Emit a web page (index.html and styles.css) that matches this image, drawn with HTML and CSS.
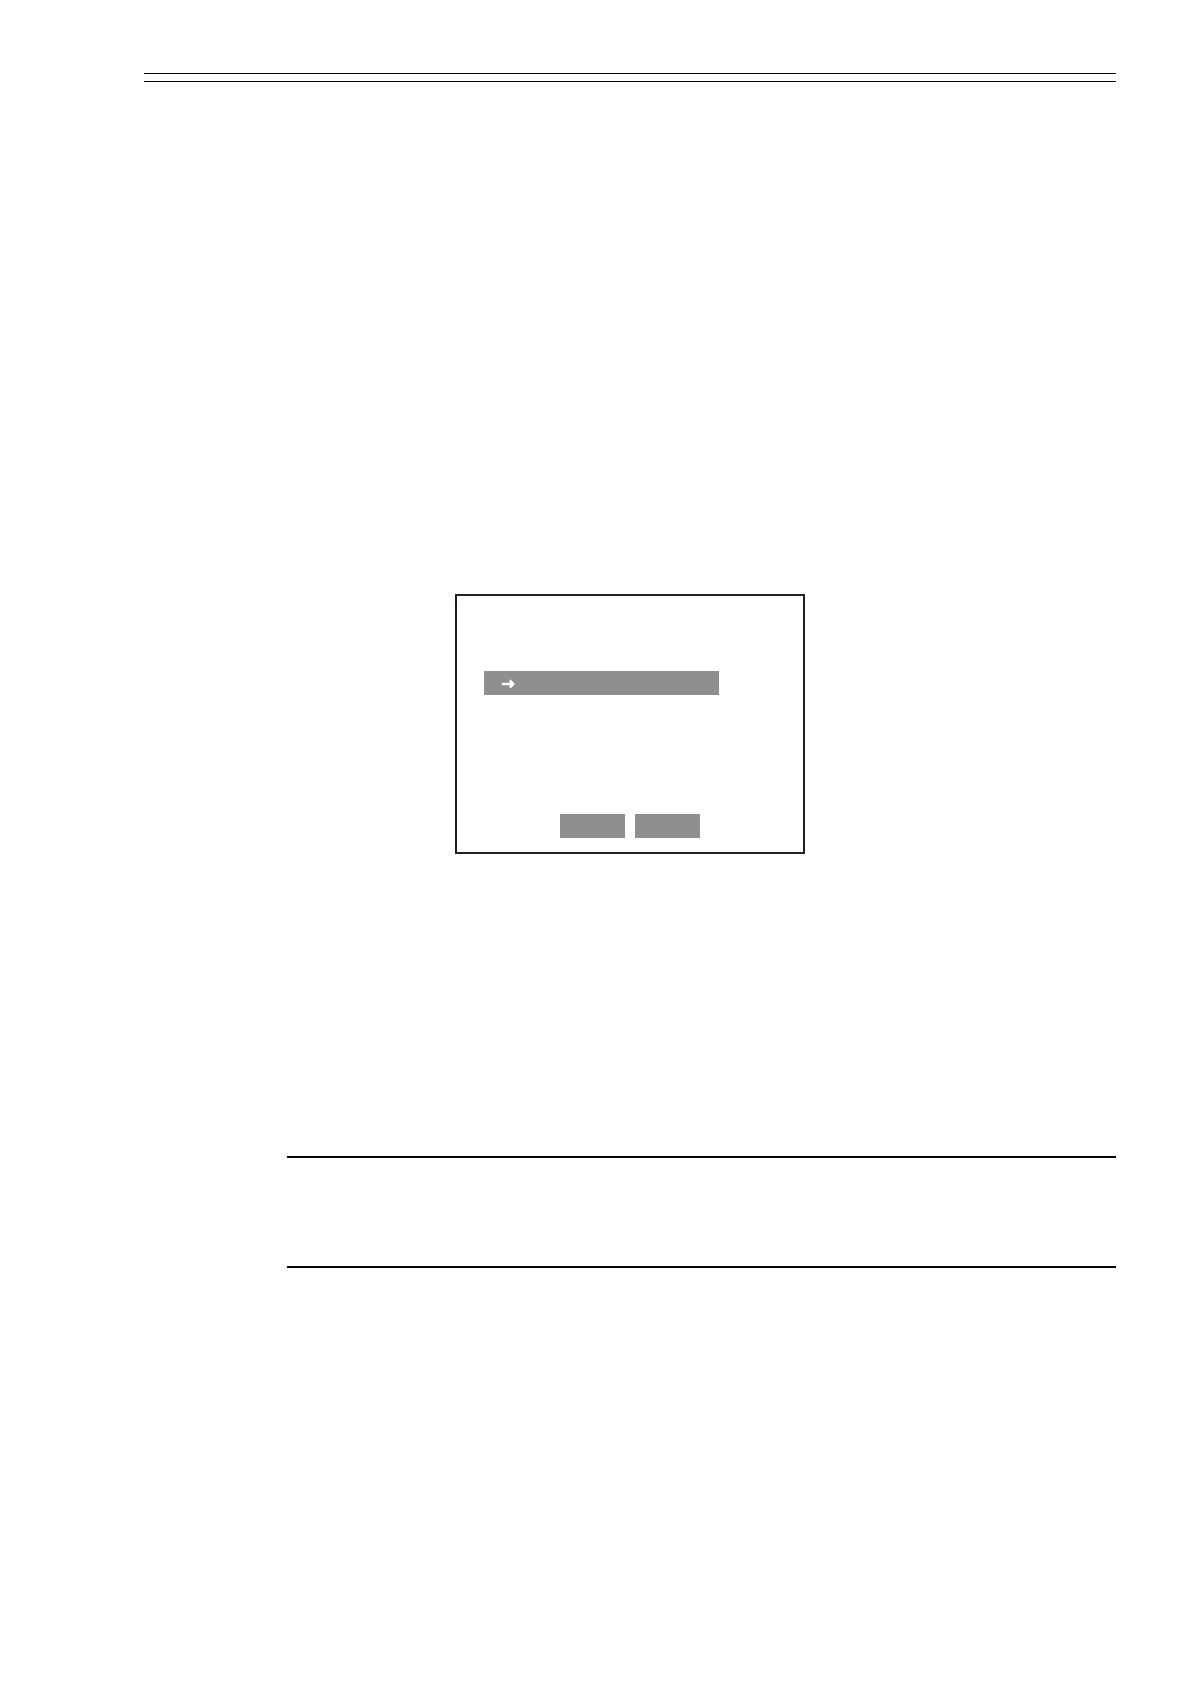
FILE: index.html
```html
<!DOCTYPE html>
<html lang="en">
<head>
  <meta charset="utf-8">
  <meta name="viewport" content="width=device-width, initial-scale=1">
  <title>Menu</title>
  <link rel="stylesheet" href="styles.css">
</head>
<body>
  <div class="page">
    <header class="page-header"></header>
    <main class="content">
      <section class="screen" aria-label="Menu">
        <button class="menu-item" type="button" aria-label="Selected item">
          <svg class="arrow" viewBox="0 0 14 10" aria-hidden="true">
            <path d="M0.8 3.8H8.6V0.8H10L14 5L10 9H8.6V6.3H0.8Z"/>
          </svg>
        </button>
        <div class="actions">
          <button class="action" type="button" aria-label="First action"></button>
          <button class="action" type="button" aria-label="Second action"></button>
        </div>
      </section>
      <aside class="note"></aside>
    </main>
  </div>
</body>
</html>
```
FILE: styles.css
```css
* {
  box-sizing: border-box;
}

body {
  margin: 0;
  background: #fff;
  font-family: "Liberation Sans", Arial, sans-serif;
}

.page {
  min-height: 100vh;
  padding: 73px 74px 73px 144px;
}

/* Double rule across the head of the page */
.page-header {
  height: 9px;
  border-top: 1px solid #000;
  border-bottom: 1px solid #000;
}

.content {
  display: flex;
  flex-direction: column;
  gap: 302px;
  padding-top: 512px;
}

.screen {
  display: flex;
  flex-direction: column;
  gap: 119px;
  width: 350px;
  margin-left: 311px;
  padding: 75px 0 14px;
  border: 2px solid #231f20;
}

.menu-item,
.action {
  height: 24px;
  padding: 0;
  border: 0;
  background: #908f8f;
}

.menu-item {
  display: flex;
  align-items: center;
  width: 235px;
  margin-left: 27px;
  padding: 2px 17px 0;
}

.arrow {
  width: 14px;
  height: 10px;
  fill: #fff;
}

.actions {
  display: flex;
  justify-content: center;
  gap: 10px;
}

.action {
  width: 65px;
}

.note {
  height: 112px;
  margin-left: 143px;
  border-top: 2px solid #000;
  border-bottom: 2px solid #000;
}
```
